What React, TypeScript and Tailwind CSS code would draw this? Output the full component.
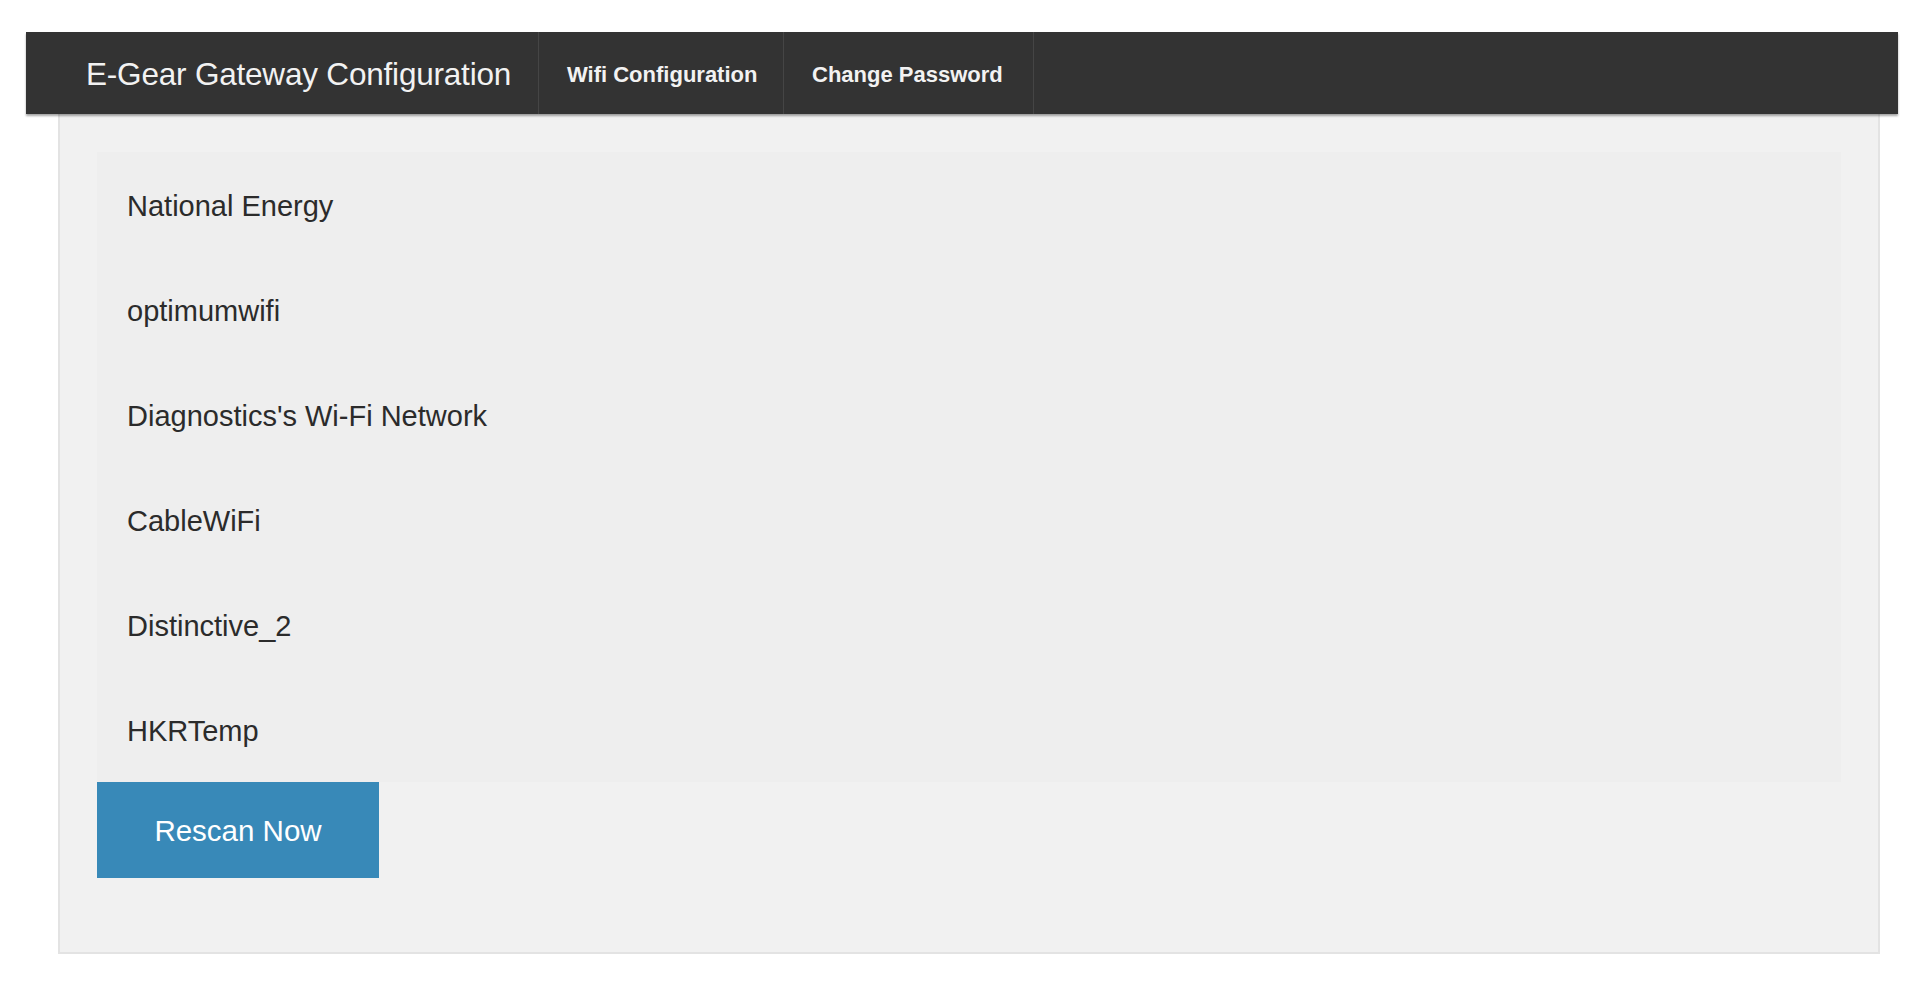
const networks = [
  "National Energy",
  "optimumwifi",
  "Diagnostics's Wi-Fi Network",
  "CableWiFi",
  "Distinctive_2",
  "HKRTemp",
];

export default function App() {
  return (
    <div className="min-h-screen bg-white pt-[32px] px-[26px] font-['Liberation_Sans',Arial,sans-serif]">
      {/* Top nav */}
      <nav className="h-[82px] bg-[#333333] flex items-stretch shadow-[0_2px_2px_rgba(0,0,0,0.35)] relative z-10">
        <div className="w-[513px] pl-[60px] pt-[3px] flex items-center border-r border-[#454545] text-[31.5px] text-[#f2f2f2] tracking-[-0.2px]">
          E-Gear Gateway Configuration
        </div>
        <a className="w-[245px] pl-[28px] pt-[2px] flex items-center border-r border-[#454545] text-[22px] font-bold text-[#f2f2f2]">
          Wifi Configuration
        </a>
        <a className="w-[250px] pl-[28px] pt-[2px] flex items-center border-r border-[#454545] text-[22px] font-bold text-[#f2f2f2]">
          Change Password
        </a>
      </nav>

      {/* Panel */}
      <div className="ml-[32px] mr-[18px] bg-[#f1f1f1] border-x-2 border-b-2 border-[#e3e3e3] pt-[38px] px-[37px] pb-[74px]">
        <ul className="bg-[#eeeeee]">
          {networks.map((n) => (
            <li key={n} className="h-[105px] flex items-center pl-[30px] pt-[4px] text-[29px] text-[#2b2b2b]">
              {n}
            </li>
          ))}
        </ul>
        <button className="w-[282px] h-[96px] pt-[3px] bg-[#3889b8] text-white text-[29.5px]">
          Rescan Now
        </button>
      </div>
    </div>
  );
}
